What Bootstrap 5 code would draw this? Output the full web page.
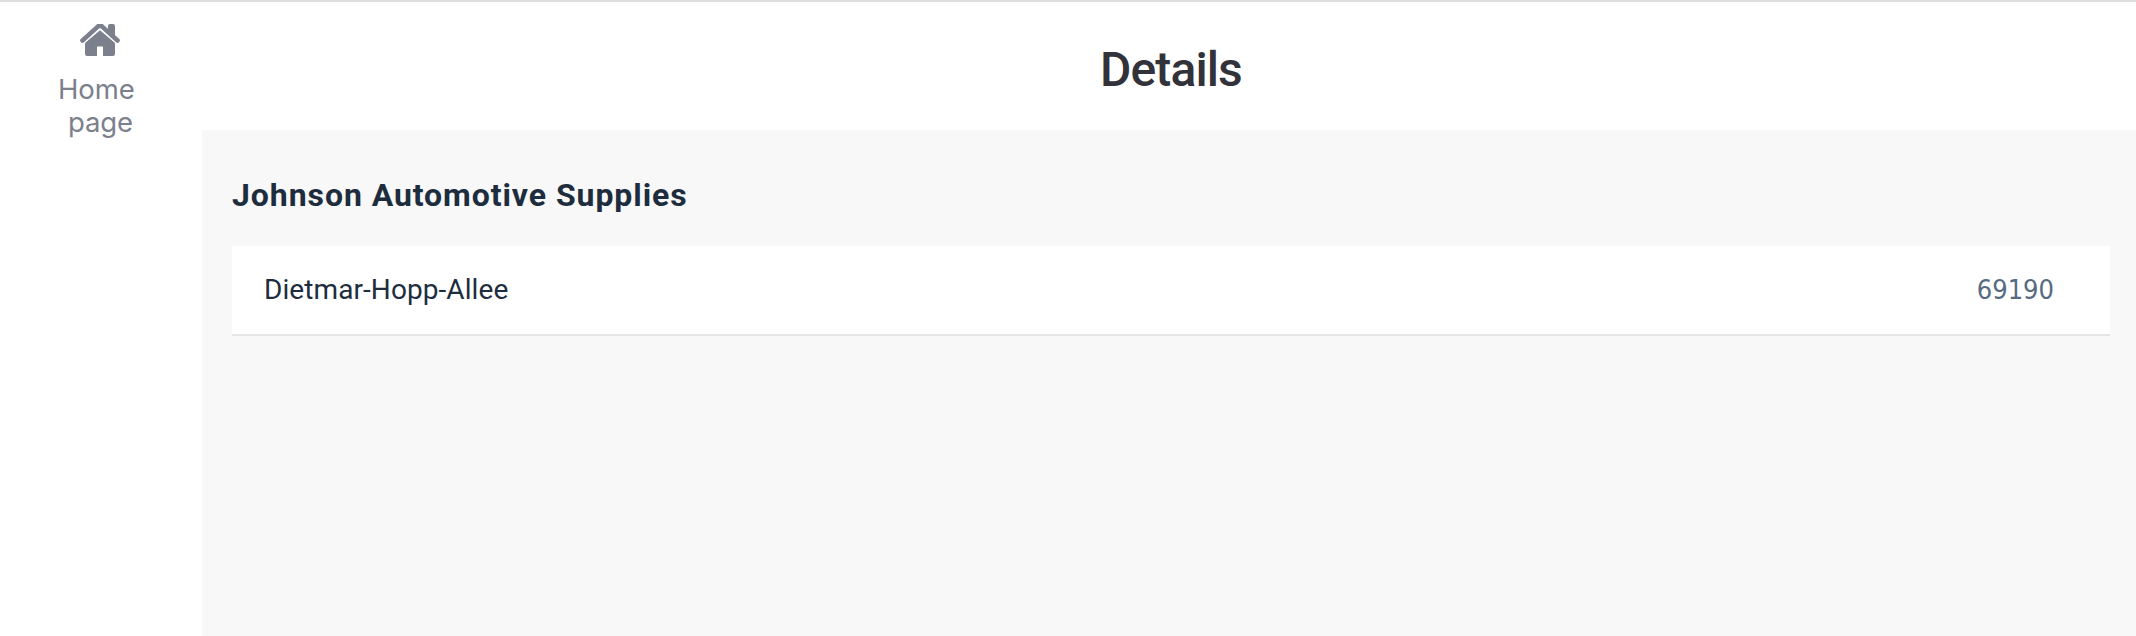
<!DOCTYPE html>
<html lang="en">
<head>
<meta charset="utf-8">
<title>Details</title>
<link href="https://cdn.jsdelivr.net/npm/bootstrap@5.3.0/dist/css/bootstrap.min.css" rel="stylesheet">
<style>
body { font-family: Roboto, "Noto Sans", sans-serif; background: #fff; overflow: hidden; }
.app-shell { height: 636px; border-top: 2px solid #ddd; }
.side-nav { width: 202px; }
.home-link { font-family: Inter, sans-serif; font-size: 27.5px; line-height: 33px; color: #7c808c; padding: 22px 0 0; width: 200px; }
.home-link svg { display: block; margin-bottom: 17px; margin-left: 80px; }
.home-first { display: block; margin-left: 58px; letter-spacing: -.1px; }
.home-second { display: block; margin-left: 68px; letter-spacing: -.1px; }
.page-head { height: 128px; padding-top: 7px; padding-left: 4px; }
.page-title { font-size: 48px; line-height: 66px; font-weight: 500; color: #32323a; letter-spacing: -.9px; }
.page-body { background: #f8f8f8; padding: 43px 26px 0 30px; }
.group-title { font-size: 32px; line-height: 44px; height: 73px; font-weight: 700; color: #1d2d3e; letter-spacing: .93px; }
.info-row { height: 90px; border-bottom: 2px solid #e5e5e5; padding: 0 56px 0 32px; font-size: 28px; line-height: 38px; color: #1d2d3e; letter-spacing: .08px; }
.postal { font-family: "DejaVu Sans Condensed", "DejaVu Sans", sans-serif; font-size: 27px; color: #556b82; letter-spacing: 0; }
</style>
</head>
<body>
<div class="app-shell d-flex">
  <nav class="side-nav flex-shrink-0">
    <a class="home-link d-block text-decoration-none" href="#">
      <svg width="40" height="32" viewBox="0 0 40 32" fill="#7c808c" aria-hidden="true">
        <path d="M28 2Q28 0 30 0H33Q35 0 35 2V12L28 6Z"/>
        <path d="M2.5 16.5L17.8 2.6Q20 .8 22.2 2.6L37.5 16.5" fill="none" stroke="#7c808c" stroke-width="4.6" stroke-linecap="round" stroke-linejoin="round"/>
        <path d="M20 5.8L35 18.6V30Q35 32 33 32H23V22.5H17V32H7Q5 32 5 30V18.6Z"/>
        <path d="M5 18.6L20 5.8L35 18.6" fill="none" stroke="#fff" stroke-width=".9"/>
      </svg>
      <span class="home-first">Home</span>
      <span class="home-second">page</span>
    </a>
  </nav>
  <main class="flex-grow-1 d-flex flex-column">
    <header class="page-head d-flex align-items-center justify-content-center">
      <h1 class="page-title m-0">Details</h1>
    </header>
    <section class="page-body flex-grow-1">
      <h2 class="group-title m-0">Johnson Automotive Supplies</h2>
      <div class="info-row bg-white d-flex align-items-center justify-content-between">
        <span class="street">Dietmar-Hopp-Allee</span>
        <span class="postal">69190</span>
      </div>
    </section>
  </main>
</div>
<script src="https://cdn.jsdelivr.net/npm/bootstrap@5.3.0/dist/js/bootstrap.bundle.min.js"></script>
</body>
</html>
